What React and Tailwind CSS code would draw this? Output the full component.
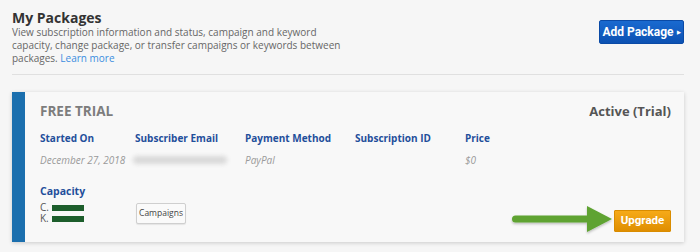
import React from "react";

export default function App() {
  return (
    <div className="relative w-[700px] h-[252px] overflow-hidden bg-[#f6f6f6] pl-[12px] pr-[16px] font-['Open_Sans',sans-serif] text-[#555]">
      {/* Header */}
      <div className="flex justify-between items-start">
        <div className="pt-[9px]">
          <h1 className="text-[14px] leading-[17px] font-bold text-[#333]">My Packages</h1>
          <p className="text-[10px] leading-[13px] text-[#666] w-[345px]">
            View subscription information and status, campaign and keyword<br />
            capacity, change package, or transfer campaigns or keywords between packages.{" "}
            <a className="text-[#3b8de0]">Learn more</a>
          </p>
        </div>
        <button className="mt-[20px] h-[24px] w-[85px] rounded-[2px] border border-[#0a4aa6] bg-gradient-to-b from-[#1a6ad0] to-[#0c51b2] text-white text-[12px] font-bold font-['Roboto',sans-serif] flex items-center justify-center gap-[3px]">
          Add Package
          <span className="text-[5px] leading-none">▶</span>
        </button>
      </div>
      <div className="mt-[9px] h-px bg-[#e0e0e0]" />

      {/* Card */}
      <div className="mt-[17px] h-[150px] flex bg-[#f8f8f8] shadow-[0_1px_4px_rgba(0,0,0,0.18)]">
        <div className="w-[13px] bg-[#1b6fae]" />
        <div className="flex-1 pl-[15px] pr-[13px] pt-[10px]">
          <div className="flex justify-between items-center">
            <div className="text-[13.5px] leading-[18px] font-bold text-[#7d7d7d]">FREE TRIAL</div>
            <div className="text-[13px] leading-[18px] font-bold text-[#555]">Active (Trial)</div>
          </div>
          <div className="mt-[11px] grid grid-cols-[95px_110px_110px_110px_110px] text-[10px] leading-[14px]">
            <div className="font-bold text-[#1f4f9b]">Started On</div>
            <div className="font-bold text-[#1f4f9b]">Subscriber Email</div>
            <div className="font-bold text-[#1f4f9b]">Payment Method</div>
            <div className="font-bold text-[#1f4f9b]">Subscription ID</div>
            <div className="font-bold text-[#1f4f9b]">Price</div>
            <div className="mt-[8px] italic text-[#9a9a9a]">December 27, 2018</div>
            <div className="mt-[8px] flex items-center -ml-[2px]">
              <div className="w-[94px] h-[8px] rounded-full bg-[#d9d9d9] blur-[2px]" />
            </div>
            <div className="mt-[8px] italic text-[#9a9a9a]">PayPal</div>
            <div className="mt-[8px]" />
            <div className="mt-[8px] italic text-[#9a9a9a]">$0</div>
          </div>

          <div className="mt-[17px] flex items-start">
            <div className="w-[96px]">
              <div className="text-[10.5px] leading-[14px] font-bold text-[#1f4f9b]">Capacity</div>
              <div className="mt-[4px] text-[10px] leading-[11px] text-[#555]">
                <div className="flex items-center h-[11px]">
                  <span className="w-[12px]">C.</span>
                  <span className="w-[32px] h-[6px] bg-[#1d5e2c]" />
                </div>
                <div className="flex items-center h-[11px]">
                  <span className="w-[12px]">K.</span>
                  <span className="w-[32px] h-[6px] bg-[#1d5e2c]" />
                </div>
              </div>
            </div>
            <button className="mt-[19px] h-[21px] w-[50px] rounded-[2px] border border-[#cfcfcf] bg-[#fafafa] shadow-[0_1px_1px_rgba(0,0,0,0.08)] text-[8.5px] text-[#444] flex items-center justify-center">
              Campaigns
            </button>
            <button className="ml-auto mt-[26px] h-[22px] w-[57px] rounded-[1px] border border-[#d98c00] bg-gradient-to-b from-[#f6aa18] to-[#df8e00] text-white text-[11.5px] font-bold font-['Roboto',sans-serif] flex items-center justify-center">
              Upgrade
            </button>
          </div>
        </div>
      </div>

      {/* Annotation arrow */}
      <svg className="absolute left-[510px] top-[205px]" width="104" height="30" viewBox="0 0 104 30">
        <defs>
          <filter id="sh" x="-10%" y="-20%" width="120%" height="160%">
            <feDropShadow dx="0" dy="1.5" stdDeviation="1.2" floodColor="#000" floodOpacity="0.25" />
          </filter>
        </defs>
        <g filter="url(#sh)">
          <rect x="2" y="10.5" width="80" height="7" rx="3.5" fill="#5ea331" />
          <polygon points="77,1 102,14 77,27" fill="#5ea331" />
        </g>
      </svg>
    </div>
  );
}
